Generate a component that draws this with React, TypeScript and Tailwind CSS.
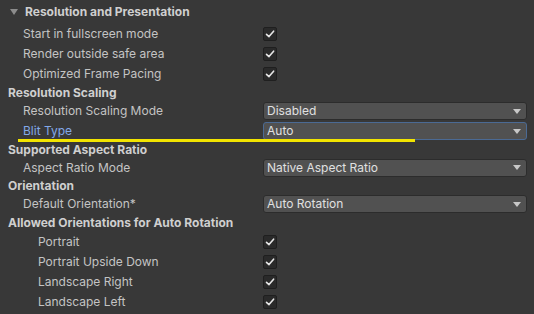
import { ReactNode } from "react"

const font = { fontFamily: "Inter, 'Noto Sans', sans-serif" }

const Check = () => (
  <div className="w-[14px] h-[14px] rounded-[2px] bg-[#2a2a2a] border border-[#1f1f1f] flex items-center justify-center">
    <svg width="10" height="10" viewBox="0 0 10 10">
      <path d="M1.5 5.3 L4 7.6 L8.6 2.2" fill="none" stroke="#e6e6e6" strokeWidth="1.6" strokeLinecap="round" strokeLinejoin="round" />
    </svg>
  </div>
)

const Dropdown = ({ value, focused }: { value: string; focused?: boolean }) => (
  <div
    className={`w-[264px] h-[18px] rounded-[3px] bg-[#515151] border flex items-center justify-between pl-[3px] pr-[5px] text-[12px] text-[#e0e0e0] ${
      focused ? "border-[#4b6a94]" : "border-[#2c2c2c]"
    }`}
  >
    <span>{value}</span>
    <svg width="8" height="5" viewBox="0 0 8 5">
      <path d="M0 0 H8 L4 5 Z" fill="#c8c8c8" />
    </svg>
  </div>
)

const Row = ({ label, indent, h, children, blue }: { label: string; indent: string; h: string; children: ReactNode; blue?: boolean }) => (
  <div className={`flex items-center ${h}`}>
    <div className={`w-[263px] ${indent} text-[12px] ${blue ? "text-[#82a8e8]" : "text-[#c4c4c4]"}`}>{label}</div>
    {children}
  </div>
)

const Heading = ({ text, h }: { text: string; h: string }) => (
  <div className={`flex items-center ${h} pl-[8px] text-[12px] font-bold text-[#cfcfcf]`}>{text}</div>
)

export default function App() {
  return (
    <div className="relative w-[534px] h-[314px] bg-[#383838] overflow-hidden" style={font}>
      <div className="flex items-center h-[24px] pl-[10px] gap-[7px] text-[12px] font-bold text-[#cfcfcf]">
        <svg width="8" height="6" viewBox="0 0 8 6">
          <path d="M0 0 H8 L4 6 Z" fill="#8c8c8c" />
        </svg>
        <span>Resolution and Presentation</span>
      </div>
      <Row label="Start in fullscreen mode" indent="pl-[23px]" h="h-[20px]"><Check /></Row>
      <Row label="Render outside safe area" indent="pl-[23px]" h="h-[20px]"><Check /></Row>
      <Row label="Optimized Frame Pacing" indent="pl-[23px]" h="h-[20px]"><Check /></Row>
      <Heading text="Resolution Scaling" h="h-[17px]" />
      <Row label="Resolution Scaling Mode" indent="pl-[23px]" h="h-[20px]"><Dropdown value="Disabled" /></Row>
      <Row label="Blit Type" indent="pl-[23px]" h="h-[20px]" blue><Dropdown value="Auto" focused /></Row>
      <Heading text="Supported Aspect Ratio" h="h-[17px]" />
      <Row label="Aspect Ratio Mode" indent="pl-[23px]" h="h-[19px]"><Dropdown value="Native Aspect Ratio" /></Row>
      <Heading text="Orientation" h="h-[18px]" />
      <Row label="Default Orientation*" indent="pl-[23px]" h="h-[18px]"><Dropdown value="Auto Rotation" /></Row>
      <Heading text="Allowed Orientations for Auto Rotation" h="h-[19px]" />
      <Row label="Portrait" indent="pl-[38px]" h="h-[20px]"><Check /></Row>
      <Row label="Portrait Upside Down" indent="pl-[38px]" h="h-[20px]"><Check /></Row>
      <Row label="Landscape Right" indent="pl-[38px]" h="h-[20px]"><Check /></Row>
      <Row label="Landscape Left" indent="pl-[38px]" h="h-[20px]"><Check /></Row>

      <div className="absolute left-[18px] top-[139px] w-[397px] h-[3px] bg-[#f2e400]" />
    </div>
  )
}
